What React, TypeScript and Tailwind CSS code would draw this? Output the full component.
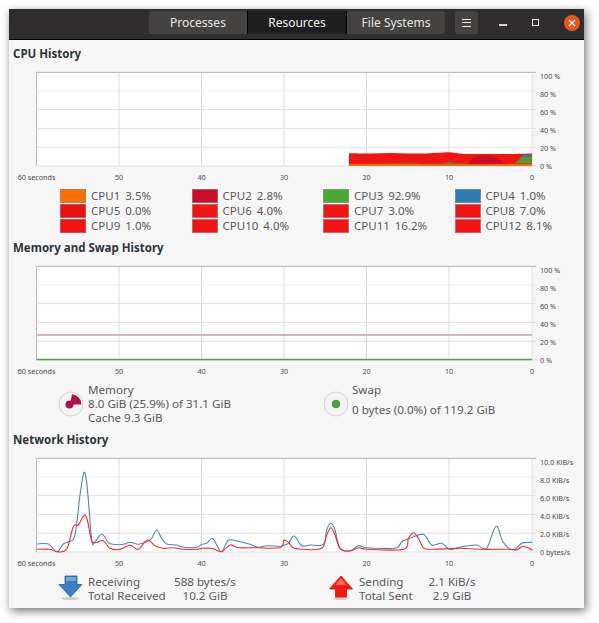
import React from "react";

const font = { fontFamily: '"Noto Sans", sans-serif' };

type P = [number, number];
const z1 = (a: number[][]): P[] => a.map(([x, y]) => [30 + x / 3, 455 + y / 3]);
const z2 = (a: number[][]): P[] => a.map(([x, y]) => [280 + x / 3, 455 + y / 3]);

function smooth(pts: P[]): string {
  let d = `M${pts[0][0].toFixed(1)} ${pts[0][1].toFixed(1)}`;
  for (let i = 0; i < pts.length - 1; i++) {
    const p0 = pts[Math.max(i - 1, 0)];
    const p1 = pts[i];
    const p2 = pts[i + 1];
    const p3 = pts[Math.min(i + 2, pts.length - 1)];
    const c1x = p1[0] + (p2[0] - p0[0]) / 6;
    const c1y = p1[1] + (p2[1] - p0[1]) / 6;
    const c2x = p2[0] - (p3[0] - p1[0]) / 6;
    const c2y = p2[1] - (p3[1] - p1[1]) / 6;
    d += ` C${c1x.toFixed(1)} ${c1y.toFixed(1)} ${c2x.toFixed(1)} ${c2y.toFixed(1)} ${p2[0].toFixed(1)} ${p2[1].toFixed(1)}`;
  }
  return d;
}

const blue: P[] = [
  ...z1([[20,267],[55,267],[80,290],[100,267],[115,260],[135,240],[150,120],[162,52],[172,100],[185,255],[195,260],[215,237],[235,262],[250,268],[280,268],[300,262],[325,268],[350,260],[365,250],[380,225],[395,250],[410,267],[440,270],[460,277],[500,277],[515,268],[530,265],[547,250],[560,270],[575,290],[595,256],[620,258],[660,268],[685,277],[710,272],[750,274]]),
  ...z2([[12,270],[25,265],[42,243],[65,272],[90,270],[130,268],[140,225],[153,205],[165,225],[180,280],[210,287],[235,272],[260,278],[345,280],[365,260],[390,250],[430,238],[455,270],[485,265],[510,283],[545,275],[590,270],[620,280],[648,214],[670,262],[700,285],[725,265],[757,262]]),
];
const red: P[] = [
  ...z1([[20,283],[60,283],[80,290],[110,283],[130,215],[145,210],[162,182],[172,195],[185,258],[200,262],[220,257],[240,280],[270,283],[300,271],[325,283],[352,255],[375,272],[400,280],[430,278],[460,283],[500,283],[515,280],[545,280],[575,290],[600,270],[625,278],[680,278],[750,278]]),
  ...z2([[12,256],[25,262],[40,278],[70,283],[125,280],[140,240],[153,218],[165,240],[180,280],[210,288],[235,278],[260,283],[370,283],[385,250],[400,233],[415,250],[430,278],[450,283],[540,280],[600,283],[690,283],[710,285],[730,274],[757,285]]),
];

const cpuTop: P[] = [[349,153.3],[370,153.5],[390,153],[410,153.6],[430,153.2],[447,152.2],[456,153],[465,154],[490,154],[510,154],[532,153.5]];
const orangeTop: P[] = [[349,164.5],[400,164.3],[450,164.6],[490,164.4],[532,164.2]];
const crimson: P[] = [[468,164],[473,158],[480,156],[490,156.2],[497,158],[503,162],[507,164]];
const green: P[] = [[349,164],[400,163.4],[440,163.6],[450,162.5],[462,163.6],[510,163.4],[517,161],[522,157],[532,156.4]];
const blueBlob: P[] = [[520,157],[524,155],[532,154.8]];

function Graph({ top, labels, children }: { top: number; labels: string[]; children?: React.ReactNode }) {
  const xs = [36.5, 119, 201.5, 284, 366.5, 449, 532];
  const xl = ["60 seconds", "50", "40", "30", "20", "10", "0"];
  const ys = [0, 1, 2, 3, 4, 5].map((i) => top + i * 18.8);
  return (
    <svg width="575" height="118" viewBox={`9 ${top - 6} 575 118`} className="block" style={font}>
      <rect x={36.5} y={top} width={495.5} height={94} fill="#ffffff" />
      {ys.map((y, i) => (
        <line key={i} x1={36.5} x2={536} y1={y} y2={y} stroke={i === 1 ? "#efefef" : "#e0e0e0"} strokeWidth={1} />
      ))}
      {xs.map((x, i) => (
        <line key={i} x1={x} x2={x} y1={top} y2={top + 94} stroke="#dcdcdc" strokeWidth={1} />
      ))}
      <line x1={36.5} x2={536} y1={top + 0.5} y2={top + 0.5} stroke="#bcbcbc" />
      <line x1={36.5} x2={36.5} y1={top} y2={top + 94} stroke="#bcbcbc" />
      {children}
      {labels.map((l, i) => (
        <text key={i} x={540} y={top + 6.5 + i * 18} fontSize="7.2" fill="#4a4a4a">{l}</text>
      ))}
      {xl.map((l, i) => (
        <text key={i} x={xs[i]} y={top + 107.5} textAnchor="middle" fontSize="7.2" fill="#4a4a4a">{l}</text>
      ))}
    </svg>
  );
}

function Swatch({ c, b }: { c: string; b: string }) {
  return (
    <span className="block w-[26px] h-[14px] border-[1.5px] shrink-0" style={{ background: c, borderColor: b }} />
  );
}

const cpus: [string, string, string, string][] = [
  ["CPU1", "3.5%", "#ff6e00", "#b0845f"],
  ["CPU2", "2.8%", "#cb0c29", "#a86070"],
  ["CPU3", "92.9%", "#49a835", "#7f9f78"],
  ["CPU4", "1.0%", "#2d7db3", "#76899a"],
  ["CPU5", "0.0%", "#ef1111", "#a86060"],
  ["CPU6", "4.0%", "#f31313", "#b47070"],
  ["CPU7", "3.0%", "#f31313", "#b47070"],
  ["CPU8", "7.0%", "#f31313", "#b47070"],
  ["CPU9", "1.0%", "#f31313", "#a86060"],
  ["CPU10", "4.0%", "#f31313", "#b47070"],
  ["CPU11", "16.2%", "#f31313", "#b47070"],
  ["CPU12", "8.1%", "#f31313", "#b47070"],
];

function Title({ children }: { children: React.ReactNode }) {
  return <div className="pl-[4px] h-[20px] leading-[20px] text-[11.5px] font-bold text-[#2e3436]">{children}</div>;
}

const pctLabels = ["100 %", "80 %", "60 %", "40 %", "20 %", "0 %"];
const kibLabels = ["10.0 KiB/s", "8.0 KiB/s", "6.0 KiB/s", "4.0 KiB/s", "2.0 KiB/s", "0 bytes/s"];

export default function App() {
  return (
    <div className="w-[599px] h-[623px] bg-white pt-[9px] pl-[9px]" style={font}>
      <div className="w-[575px] h-[599px] bg-[#f6f6f6] flex flex-col shadow-[2px_3px_9px_rgba(0,0,0,0.55)] overflow-hidden">
        <header className="h-[31px] shrink-0 bg-[#2f2d2d] border-b border-black flex items-start pt-[2px] text-[12px] text-[#e4e4e4]">
          <div className="ml-[140px] flex h-[23px]">
            <div className="w-[98px] flex items-center justify-center bg-[#454341] rounded-l-[3px]">Processes</div>
            <div className="w-[100px] flex items-center justify-center bg-[#1f1e1e] border-x border-black text-[#f0f0f0]">Resources</div>
            <div className="w-[98px] flex items-center justify-center bg-[#454341] rounded-r-[3px]">File Systems</div>
          </div>
          <div className="ml-[10px] w-[23px] h-[23px] rounded-[3px] bg-[#454341] flex flex-col items-center justify-center gap-[2.5px]">
            <span className="block w-[9px] h-px bg-[#eee]" />
            <span className="block w-[9px] h-px bg-[#eee]" />
            <span className="block w-[9px] h-px bg-[#eee]" />
          </div>
          <div className="ml-[21px] w-[8px] h-[23px] flex items-center">
            <span className="block w-[8px] h-[2px] mt-[4px] bg-[#d8d8d8]" />
          </div>
          <div className="ml-[25px] w-[7px] h-[23px] flex items-center">
            <span className="block w-[7px] h-[7px] border border-[#eee]" />
          </div>
          <div className="ml-[25px] w-[16px] h-[16px] mt-[3.5px] rounded-full bg-[#e95420] flex items-center justify-center">
            <svg width="8" height="8" viewBox="0 0 8 8"><path d="M1 1 7 7M7 1 1 7" stroke="#fff" strokeWidth="1.2" /></svg>
          </div>
        </header>

        <div className="flex-1 flex flex-col pt-[4px]">
          <Title>CPU History</Title>
          <div className="mt-[2px]">
            <Graph top={72} labels={pctLabels}>
              <path d={`${smooth(cpuTop)} L532 166 L349 166 Z`} fill="#f31313" />
              <path d={`${smooth(green)} L532 166 L349 166 Z`} fill="#49a835" opacity="0.9" />
              <path d={`${smooth(blueBlob)} L532 157 Z`} fill="#2d7db3" />
              <path d={`${smooth(crimson)} Z`} fill="#cb0c29" />
              <path d="M349 164.6 H532 V163.4 H518 Z" fill="#f31313" />
              <path d={`${smooth(orangeTop)} L532 166 L349 166 Z`} fill="#ff6e00" />
            </Graph>
          </div>
          <div className="grid grid-cols-[131.5px_131.5px_131.5px_131.5px] gap-y-px pl-[51px] mt-[5px] h-[44px]">
            {cpus.map(([n, v, c, b]) => (
              <div key={n} className="flex items-center h-[14px] text-[11.5px] text-[#56585a]">
                <Swatch c={c} b={b} />
                <span className="ml-[5px]">{n}</span>
                <span className="ml-[5px]">{v}</span>
              </div>
            ))}
          </div>

          <div className="mt-[5px]"><Title>Memory and Swap History</Title></div>
          <div className="mt-[2px]">
            <Graph top={266} labels={pctLabels}>
              <line x1={36.5} x2={532} y1={335} y2={335} stroke="#dcb0c2" strokeWidth={2} />
              <line x1={36.5} x2={532} y1={359.5} y2={359.5} stroke="#5a9e4a" strokeWidth={1.5} />
            </Graph>
          </div>
          <div className="flex h-[52px] items-start text-[11.6px] leading-[14px] text-[#56585a]">
            <div className="ml-[49px] mt-[13px] w-[26px] h-[26px] shrink-0">
              <svg width="26" height="26" viewBox="0 0 26 26">
                <circle cx="13" cy="13" r="12" fill="#f4f4f4" stroke="#d4d4d4" />
                <path d="M14 3.2 A10 10 0 0 1 23.4 13.5 L12 13.5 Z" fill="#a3174e" />
                <circle cx="11.5" cy="13.5" r="4" fill="#a3174e" />
              </svg>
            </div>
            <div className="ml-[4px] mt-[5px] w-[235px]">
              <div>Memory</div>
              <div>8.0 GiB (25.9%) of 31.1 GiB</div>
              <div>Cache 9.3 GiB</div>
            </div>
            <div className="mt-[13px] w-[26px] h-[26px] shrink-0">
              <svg width="26" height="26" viewBox="0 0 26 26">
                <circle cx="13" cy="13" r="12" fill="#f4f4f4" stroke="#d4d4d4" />
                <circle cx="13" cy="13" r="3.8" fill="#49a835" stroke="#3c7a30" strokeWidth="0.8" />
              </svg>
            </div>
            <div className="ml-[3px] mt-[5px] flex flex-col gap-[6px]">
              <div>Swap</div>
              <div>0 bytes (0.0%) of 119.2 GiB</div>
            </div>
          </div>

          <Title>Network History</Title>
          <div className="mt-[2px]">
            <Graph top={458} labels={kibLabels}>
              <path d={smooth(blue)} fill="none" stroke="#4a86bd" strokeWidth={1.1} />
              <path d={smooth(red)} fill="none" stroke="#f22a2a" strokeWidth={1.1} />
            </Graph>
          </div>
          <div className="flex items-start mt-[5px] text-[11.6px] leading-[14px] text-[#56585a]">
            <div className="ml-[49px] w-[25px] h-[26px] shrink-0">
              <svg width="25" height="26" viewBox="0 0 25 26">
                <ellipse cx="12.5" cy="23.5" rx="9" ry="1.6" fill="#cfcfcf" />
                <path d="M7 1 H19 V9.5 H24 L12.5 22 L1 9.5 H7 Z" fill="#3b7fc0" stroke="#2a5f95" strokeWidth="0.8" />
                <path d="M8 2 H18 V6 H8 Z" fill="#6fa7d8" />
              </svg>
            </div>
            <div className="ml-[5px] w-[84px]">
              <div>Receiving</div>
              <div>Total Received</div>
            </div>
            <div className="w-[66px] text-center">
              <div>588 bytes/s</div>
              <div>10.2 GiB</div>
            </div>
            <div className="ml-[91px] w-[25px] h-[26px] shrink-0">
              <svg width="25" height="26" viewBox="0 0 25 26">
                <ellipse cx="12" cy="23.5" rx="8" ry="1.6" fill="#cfcfcf" />
                <path d="M12 1 L23.5 14 H17.5 V22 H6.5 V14 H0.5 Z" fill="#f21a0c" stroke="#c81208" strokeWidth="0.8" />
                <path d="M12 3 L6.5 10 H17.5 Z" fill="#f96a5c" />
              </svg>
            </div>
            <div className="ml-[5px] w-[65px]">
              <div>Sending</div>
              <div>Total Sent</div>
            </div>
            <div className="w-[56px] text-center">
              <div>2.1 KiB/s</div>
              <div>2.9 GiB</div>
            </div>
          </div>
        </div>
      </div>
    </div>
  );
}
